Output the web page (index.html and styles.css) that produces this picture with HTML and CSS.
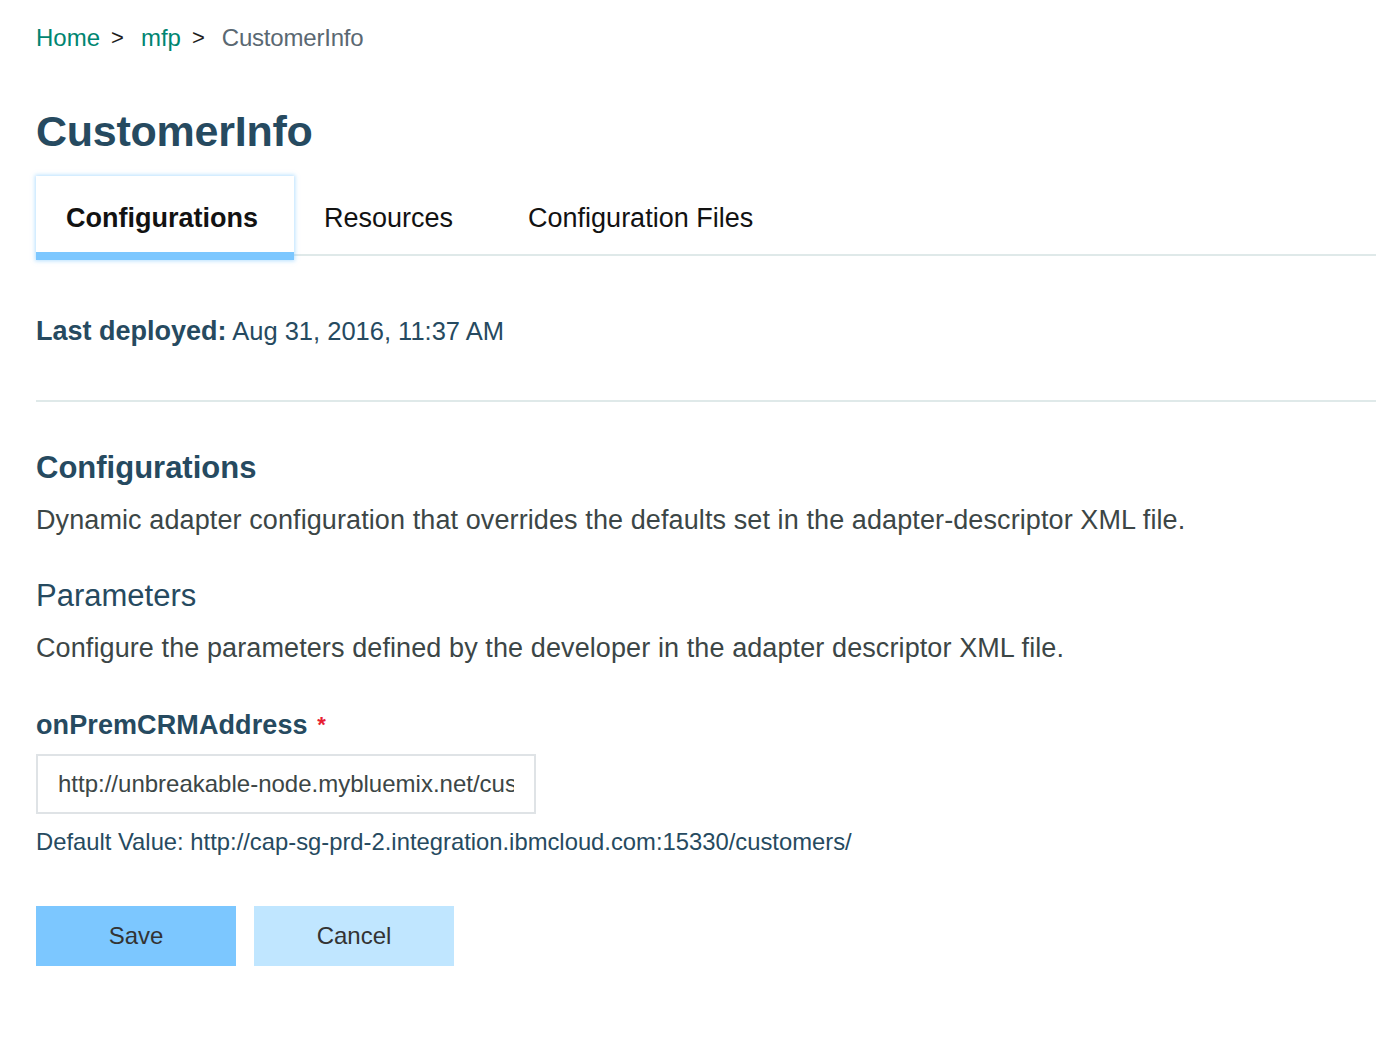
FILE: index.html
```html
<!DOCTYPE html>
<html lang="en">
<head>
<meta charset="utf-8">
<title>CustomerInfo</title>
<link rel="stylesheet" href="styles.css">
</head>
<body>
<main class="page">
  <nav class="crumbs">
    <a class="crumb-link" href="#">Home</a>
    <span class="crumb-sep">&gt;</span>
    <a class="crumb-link" href="#">mfp</a>
    <span class="crumb-sep">&gt;</span>
    <span class="crumb-current">CustomerInfo</span>
  </nav>

  <h1 class="title">CustomerInfo</h1>

  <div class="tabs">
    <div class="tab tab-active" data-text="Configurations">Configurations</div>
    <div class="tab" data-text="Resources">Resources</div>
    <div class="tab" data-text="Configuration Files">Configuration Files</div>
  </div>

  <p class="deployed"><strong>Last deployed:</strong> Aug 31, 2016, 11:37 AM</p>

  <hr class="divider">

  <h2 class="section-title">Configurations</h2>
  <p class="desc">Dynamic adapter configuration that overrides the defaults set in the adapter-descriptor XML file.</p>

  <h3 class="sub-title">Parameters</h3>
  <p class="desc desc-2">Configure the parameters defined by the developer in the adapter descriptor XML file.</p>

  <label class="field-label" for="crm">onPremCRMAddress <span class="req">*</span></label>
  <input class="field-input" id="crm" type="text" value="http://unbreakable-node.mybluemix.net/customers/">
  <p class="default-value">Default Value: http://cap-sg-prd-2.integration.ibmcloud.com:15330/customers/</p>

  <div class="actions">
    <button class="btn btn-primary" type="button">Save</button>
    <button class="btn btn-secondary" type="button">Cancel</button>
  </div>
</main>
</body>
</html>
```

FILE: styles.css
```css
html, body {
  margin: 0;
  padding: 0;
  background: #ffffff;
}

body {
  font-family: "Liberation Sans", Arial, Helvetica, sans-serif;
  color: #3c4646;
  overflow-x: hidden;
}

.page {
  padding: 26px 0 60px 36px;
}

.crumbs {
  display: flex;
  align-items: center;
  font-size: 24px;
  line-height: 24px;
  gap: 11px;
}

.crumb-link {
  color: #008571;
  text-decoration: none;
}

.crumb-sep {
  color: #1d1d1d;
  font-size: 22px;
  margin-right: 6px;
}

.crumb-current {
  color: #5a6872;
  letter-spacing: -0.2px;
}

.title {
  margin: 56px 0 0 0;
  font-size: 43px;
  line-height: 50px;
  font-weight: 700;
  color: #264a60;
  letter-spacing: -0.25px;
}

.tabs {
  display: flex;
  margin-top: 20px;
  border-bottom: 2px solid #dfe9e9;
  height: 78px;
}

.tab {
  display: inline-flex;
  flex-direction: column;
  justify-content: center;
  height: 84px;
  box-sizing: border-box;
  padding: 0 36px 0 30px;
  font-size: 27px;
  color: #121212;
  flex: none;
}

.tab::after {
  content: attr(data-text);
  font-weight: 700;
  height: 0;
  overflow: hidden;
  visibility: hidden;
}

.tab-active {
  font-weight: 700;
  background: #ffffff;
  border-bottom: 8px solid #7cc7ff;
  padding-top: 8px;
  box-shadow: 0 0 4px 1px rgba(124, 199, 255, 0.55);
}

.deployed {
  margin: 60px 0 0 0;
  font-size: 25.5px;
  line-height: 30px;
  color: #264a60;
}

.deployed strong {
  font-weight: 700;
  font-size: 27px;
}

.divider {
  margin: 54px 0 0 0;
  border: 0;
  height: 2px;
  background: #dfe9e9;
}

.section-title {
  margin: 48px 0 0 0;
  font-size: 31px;
  line-height: 36px;
  font-weight: 700;
  color: #264a60;
}

.desc {
  margin: 18px 0 0 0;
  font-size: 27px;
  line-height: 32px;
  letter-spacing: 0.1px;
  color: #3c4646;
}

.sub-title {
  margin: 42px 0 0 0;
  font-size: 31px;
  line-height: 36px;
  font-weight: 400;
  color: #264a60;
}

.desc-2 {
  margin-top: 18px;
}

.field-label {
  display: block;
  margin-top: 45px;
  font-size: 27px;
  line-height: 32px;
  font-weight: 700;
  color: #264a60;
  letter-spacing: 0.1px;
}

.req {
  color: #e71d32;
  font-size: 22px;
  vertical-align: top;
  margin-left: 2px;
}

.field-input {
  display: block;
  margin-top: 13px;
  width: 500px;
  height: 60px;
  box-sizing: border-box;
  border: 2px solid #dfe3e6;
  padding: 0 20px;
  font-family: "Liberation Sans", Arial, Helvetica, sans-serif;
  font-size: 24px;
  color: #3c4646;
  background: #ffffff;
  outline: none;
}

.default-value {
  margin: 14px 0 0 0;
  font-size: 23.8px;
  line-height: 28px;
  color: #264a60;
}

.actions {
  display: flex;
  gap: 18px;
  margin-top: 50px;
}

.btn {
  width: 200px;
  height: 60px;
  border: 0;
  font-family: "Liberation Sans", Arial, Helvetica, sans-serif;
  font-size: 24px;
  color: #333333;
  cursor: pointer;
}

.btn-primary {
  background: #7cc7ff;
}

.btn-secondary {
  background: #c0e6ff;
}
```
